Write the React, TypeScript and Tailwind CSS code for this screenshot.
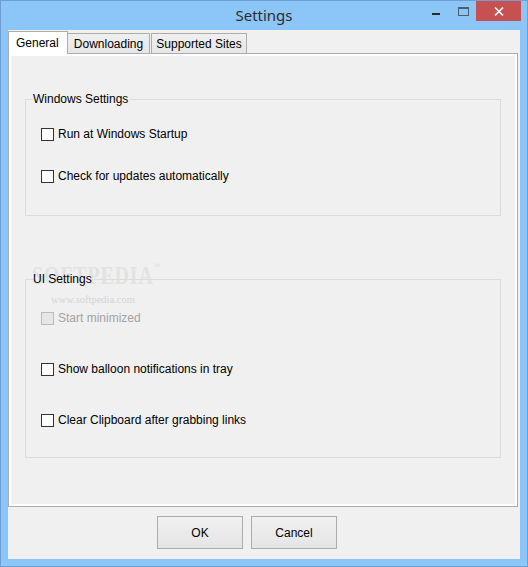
import { ReactNode } from "react";

function CheckRow({ label, disabled = false }: { label: string; disabled?: boolean }) {
  return (
    <div className="flex items-center h-[20px]">
      <div
        className={
          disabled
            ? "w-[13px] h-[13px] border border-[#bcbcbc] bg-[#e6e6e6]"
            : "w-[13px] h-[13px] border border-[#333333] bg-white"
        }
      />
      <span className={disabled ? "ml-[4px] text-[#a3a3a3]" : "ml-[4px] text-black"}>{label}</span>
    </div>
  );
}

function GroupBox({
  title,
  className,
  children,
}: {
  title: string;
  className: string;
  children: ReactNode;
}) {
  return (
    <div className={`relative mx-[14px] border-x border-b border-[#dcdcdc] ${className}`}>
      {/* top border broken by the caption, like a fieldset legend */}
      <div className="absolute -top-[7px] -left-px -right-px h-[14px] flex items-start">
        <div className="mt-[7px] w-[8px] h-px bg-[#dcdcdc]" />
        <span className="leading-[14px]">{title}</span>
        <div className="mt-[7px] ml-[2px] flex-1 h-px bg-[#dcdcdc]" />
      </div>
      {children}
    </div>
  );
}

export default function App() {
  return (
    <div className="relative w-[528px] h-[567px] bg-[#8cc5f8] border border-[#6e9fd2] flex flex-col font-['Liberation_Sans',Arial,sans-serif] text-[12px] text-black">
      {/* Title bar */}
      <div className="h-[29px] grid grid-cols-[1fr_auto_1fr]">
        <div />
        <div className="flex items-center font-['Noto_Sans','Open_Sans',sans-serif] text-[15px] text-[#2d2d2d]">
          Settings
        </div>
        <div className="flex justify-end items-start mr-[6px]">
          <div className="mt-[12px] mr-[18px] w-[8px] h-[2px] bg-[#2a2a2a]" />
          <div className="mt-[6px] mr-[7px] w-[11px] h-[9px] border border-[#4f5d70] border-t-2" />
          <div className="w-[45px] h-[20px] bg-[#c75050] flex items-center justify-center">
            <svg width="10" height="9" viewBox="0 0 10 9">
              <path d="M1 0.5 L9 8.5 M9 0.5 L1 8.5" stroke="#ffffff" strokeWidth="1.6" />
            </svg>
          </div>
        </div>
      </div>

      {/* Client area */}
      <div className="flex-1 mx-[7px] mb-[7px] bg-[#f0f0f0] flex flex-col">
        {/* Tabs */}
        <div className="flex items-end h-[23px]">
          <div className="relative z-10 w-[60px] h-[23px] -mb-px bg-white border border-[#acacac] border-b-0 flex items-center pl-[7px]">
            General
          </div>
          <div className="-ml-px w-[83px] h-[20px] bg-gradient-to-b from-[#f0f0f0] to-[#e6e6e6] border border-[#acacac] border-b-0 flex items-center justify-center pt-[1px]">
            Downloading
          </div>
          <div className="ml-[1px] w-[96px] h-[20px] bg-gradient-to-b from-[#f0f0f0] to-[#e6e6e6] border border-[#acacac] border-b-0 flex items-center justify-center pt-[1px]">
            Supported Sites
          </div>
        </div>

        {/* Tab page */}
        <div className="w-[510px] h-[454px] border border-[#acacac] bg-white p-[2px]">
          <div className="relative h-full bg-[#f0f0f0] flex flex-col">
            {/* Softpedia watermark, painted under the group boxes */}
            <div className="absolute left-[21px] top-[207px] origin-left scale-x-[0.8] font-['Liberation_Serif',serif] font-bold text-[25px] tracking-[1px] text-[#e2e2e2] leading-none">
              SOFTPEDIA<span className="text-[8px] align-top">™</span>
            </div>
            <div className="absolute left-[40px] top-[239px] font-['Liberation_Serif',serif] text-[10.5px] text-[#d4d4d4] leading-none">
              www.softpedia.com
            </div>

            <GroupBox title="Windows Settings" className="mt-[43px] h-[117px] pt-[25px] pl-[15px]">
              <div className="flex flex-col gap-[22px]">
                <CheckRow label="Run at Windows Startup" />
                <CheckRow label="Check for updates automatically" />
              </div>
            </GroupBox>

            <GroupBox title="UI Settings" className="mt-[63px] h-[179px] pt-[29px] pl-[15px]">
              <div className="flex flex-col gap-[31px]">
                <CheckRow label="Start minimized" disabled />
                <CheckRow label="Show balloon notifications in tray" />
                <CheckRow label="Clear Clipboard after grabbing links" />
              </div>
            </GroupBox>
          </div>
        </div>

        {/* Buttons */}
        <div className="flex mt-[9px] ml-[149px] gap-[8px]">
          <button className="w-[86px] h-[33px] border border-[#acacac] bg-gradient-to-b from-[#f0f0f0] to-[#e5e5e5] text-black">
            OK
          </button>
          <button className="w-[86px] h-[33px] border border-[#acacac] bg-gradient-to-b from-[#f0f0f0] to-[#e5e5e5] text-black">
            Cancel
          </button>
        </div>
      </div>
    </div>
  );
}
